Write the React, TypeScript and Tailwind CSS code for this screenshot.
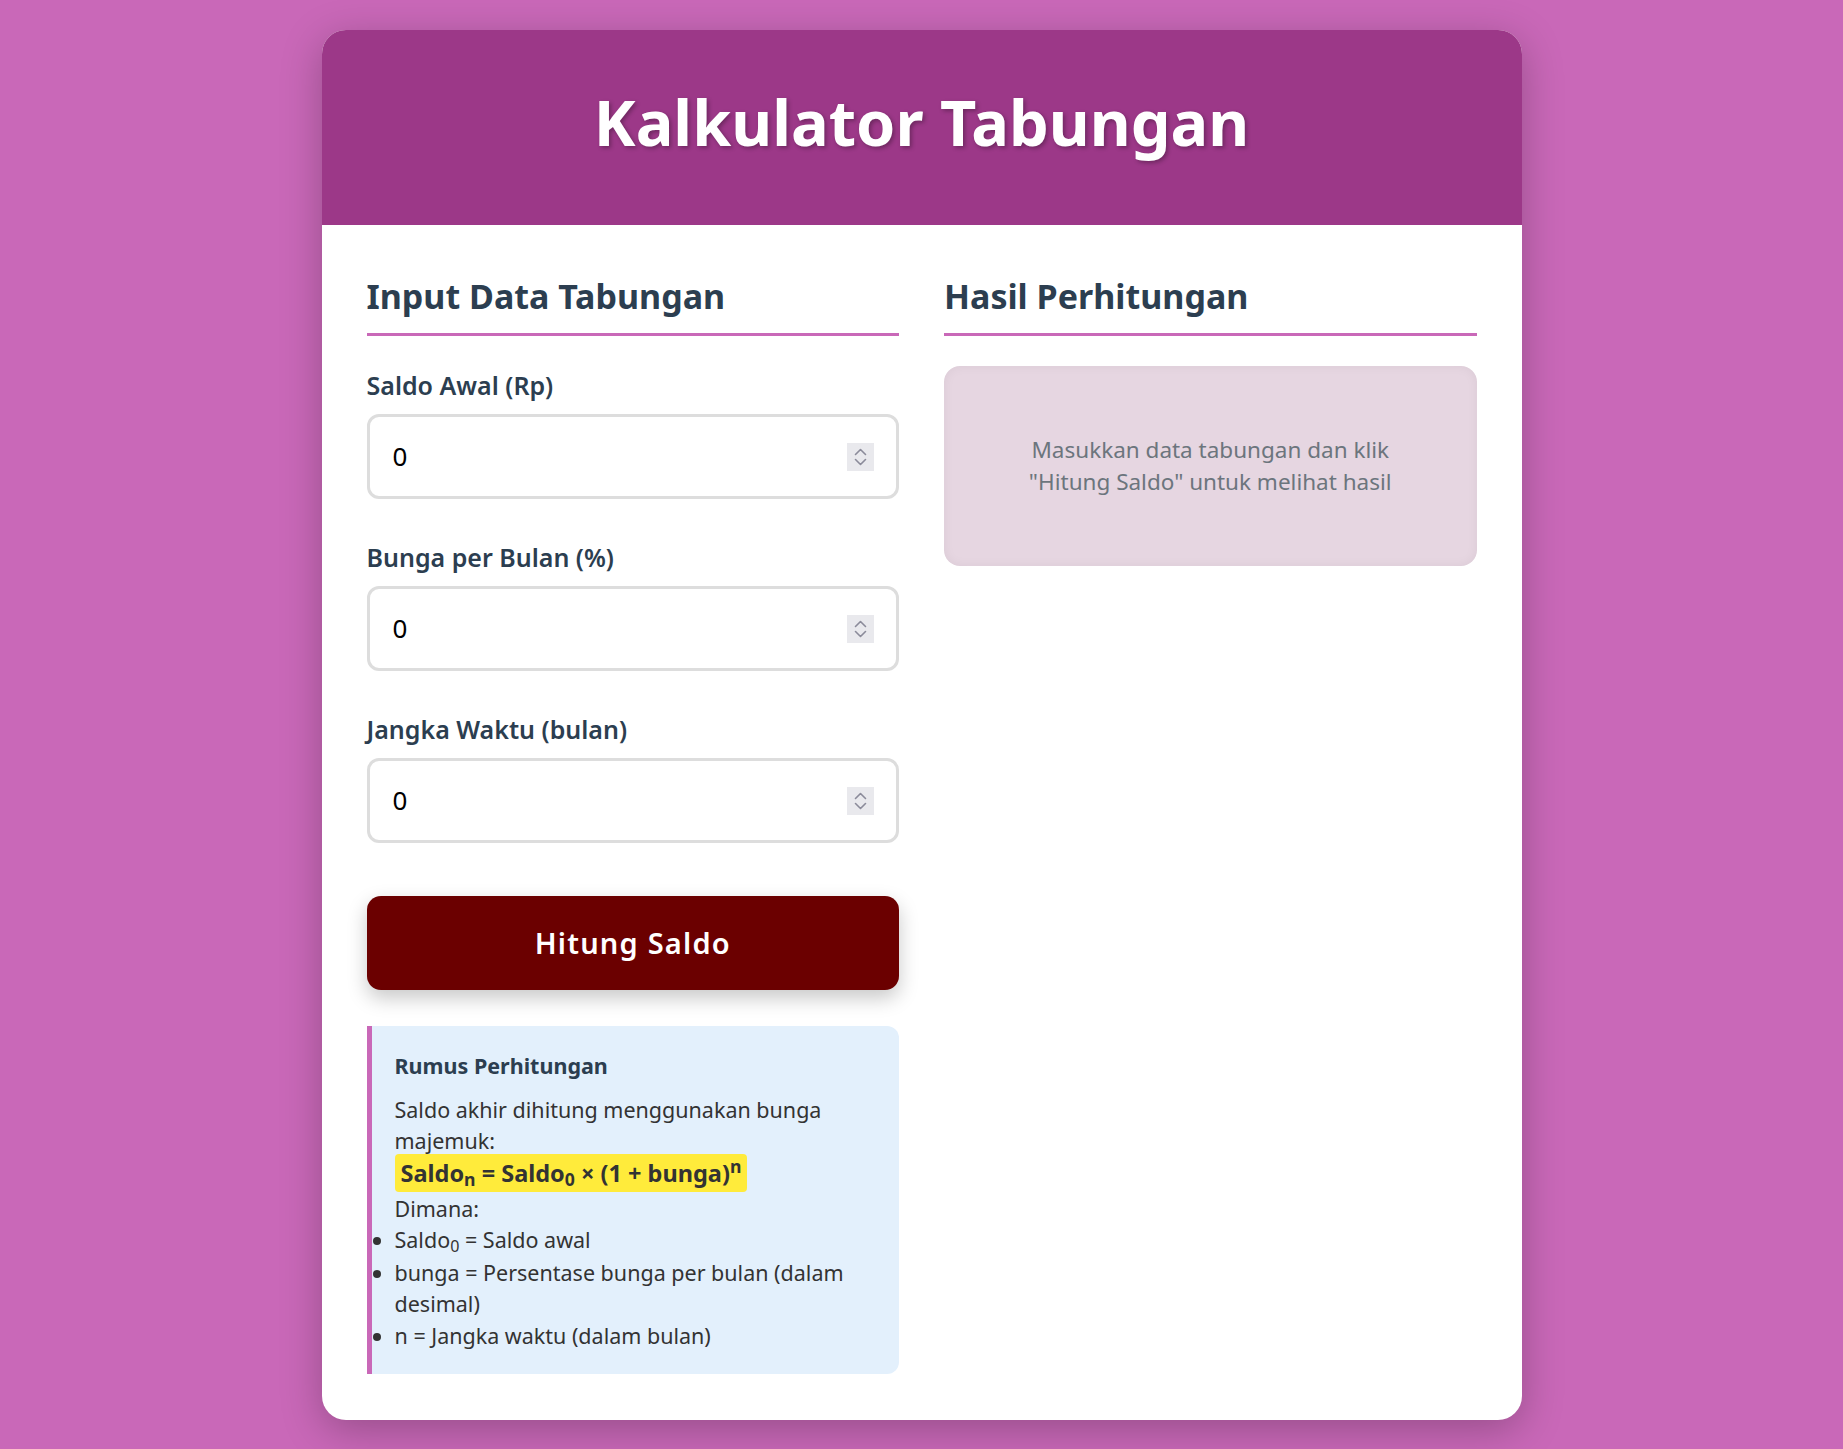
const fields = [
  { label: 'Saldo Awal (Rp)', value: '0' },
  { label: 'Bunga per Bulan (%)', value: '0' },
  { label: 'Jangka Waktu (bulan)', value: '0' },
];

function Spinner() {
  return (
    <div className="flex h-[28px] w-[27px] items-center justify-center bg-[#e9e9ed]">
      <svg width="27" height="28" viewBox="0 0 27 28" fill="none" stroke="#8b8b9a" strokeWidth="1.6" strokeLinecap="round" strokeLinejoin="round">
        <path d="M8.5 11.5 L13.5 6.5 L18.5 11.5" />
        <path d="M8.5 16.5 L13.5 21.5 L18.5 16.5" />
      </svg>
    </div>
  );
}

function NumberField({ label, value }: { label: string; value: string }) {
  return (
    <div className="mb-[40px]">
      <label className="mb-[11px] block text-[25px] font-semibold leading-[36px] text-[#2c3e50]">{label}</label>
      <div className="flex h-[85px] items-center rounded-[12px] border-[3px] border-[#dddddd] bg-white pl-[23px] pr-[22px]">
        <input
          type="text"
          readOnly
          value={value}
          className="min-w-0 flex-1 bg-transparent text-[26px] text-black outline-none"
        />
        <Spinner />
      </div>
    </div>
  );
}

export default function App() {
  return (
    <div className="min-h-screen bg-[#c968b8] pt-[30px] pb-[30px] font-['Noto_Sans',sans-serif]">
      <div className="mx-auto w-[1200px] overflow-hidden rounded-[24px] bg-white shadow-[0_10px_40px_rgba(0,0,0,0.25)]">
        <header className="bg-[#9c3888] pt-[50px] pb-[61px] text-center">
          <h1 className="text-[63px] font-bold leading-[84px] text-white [text-shadow:2px_2px_4px_rgba(0,0,0,0.3)]">
            Kalkulator Tabungan
          </h1>
        </header>

        <div className="grid grid-cols-2 gap-[45px] px-[45px] pt-[51px] pb-[46px]">
          <section>
            <h2 className="mb-[31px] border-b-[3px] border-[#c968b8] pb-[16px] text-[34px] font-bold leading-[41px] text-[#2c3e50]">
              Input Data Tabungan
            </h2>
            {fields.map((f) => (
              <NumberField key={f.label} label={f.label} value={f.value} />
            ))}
            <button className="mt-[13px] h-[94px] w-full rounded-[14px] bg-[#6b0000] text-[29px] font-semibold tracking-[1.2px] text-white shadow-[0_8px_20px_rgba(0,0,0,0.22)]">
              Hitung Saldo
            </button>

            <div className="mt-[36px] rounded-r-[12px] border-l-[5px] border-[#c968b8] bg-[#e3f0fc] pt-[24px] pr-[20px] pb-[23px] pl-[23px] text-[21.5px] leading-[31px] text-[#333333]">
              <h3 className="mb-[13px] font-bold text-[#2c3e50]">Rumus Perhitungan</h3>
              <p>Saldo akhir dihitung menggunakan bunga majemuk:</p>
              <p className="leading-[34px]">
                <span className="rounded-[4px] bg-[#ffeb3b] px-[6px] py-[3px] text-[23.5px] font-bold">
                  Saldo<sub>n</sub> = Saldo<sub>0</sub> × (1 + bunga)<sup>n</sup>
                </span>
              </p>
              <p className="mt-[2px]">Dimana:</p>
              <ul className="list-disc">
                <li className="mb-[2px]">
                  Saldo<sub>0</sub> = Saldo awal
                </li>
                <li className="mb-[1px]">bunga = Persentase bunga per bulan (dalam desimal)</li>
                <li>n = Jangka waktu (dalam bulan)</li>
              </ul>
            </div>
          </section>

          <section>
            <h2 className="mb-[30px] border-b-[3px] border-[#c968b8] pb-[16px] text-[34px] font-bold leading-[41px] text-[#2c3e50]">
              Hasil Perhitungan
            </h2>
            <div className="flex h-[200px] items-center justify-center rounded-[16px] bg-[#e6d6e1] px-[60px] text-center text-[22.5px] leading-[32px] text-[#6c757d] shadow-[inset_0_0_12px_rgba(0,0,0,0.05)]">
              <p>Masukkan data tabungan dan klik "Hitung Saldo" untuk melihat hasil</p>
            </div>
          </section>
        </div>
      </div>
    </div>
  );
}
